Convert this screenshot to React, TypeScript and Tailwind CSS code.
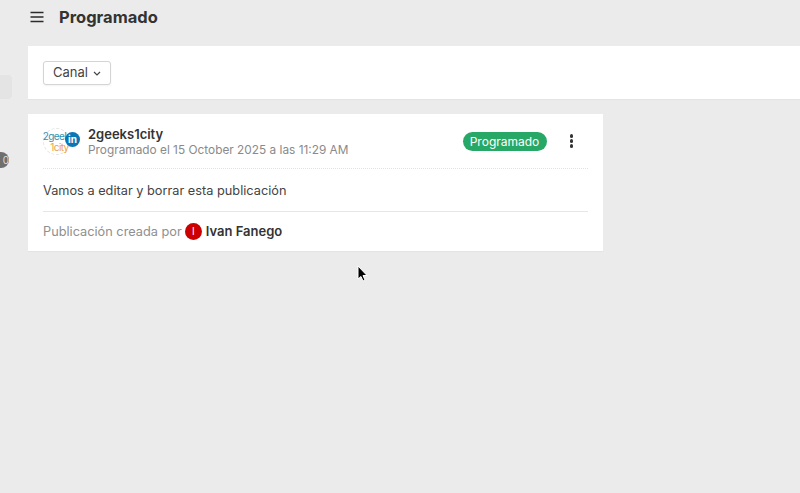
function Avatar() {
  return (
    <div className="relative w-[37px] h-[27px] shrink-0">
      <div className="w-[27px] h-[27px] rounded-full border border-dashed border-neutral-200 flex flex-col items-center justify-center text-[10px] leading-[10px] tracking-[-0.6px] whitespace-nowrap">
        <span className="text-[#2f93b5] -ml-[1px]">2geek</span>
        <span className="text-[#eba14a] ml-[6px] mt-[1px]">1city</span>
      </div>
      <div className="absolute left-[22px] top-[4px] w-[15px] h-[15px] rounded-full bg-[#0a77b5] text-white text-[10px] font-bold leading-[15px] text-center">
        in
      </div>
    </div>
  );
}

function Cursor() {
  return (
    <svg className="absolute left-[355px] top-[264px]" width="14" height="20" viewBox="0 0 14 20">
      <path d="M3 2 L3 15 L6 12.5 L8 17 L10 16 L8 11.5 L12 11.5 Z" fill="#000" stroke="#fff" strokeWidth="1" />
    </svg>
  );
}

function Hamburger() {
  return (
    <svg width="14" height="12" viewBox="0 0 14 12" className="shrink-0 ml-[2px]">
      <path d="M0.5 1.5 H13.5 M0.5 6 H13.5 M0.5 10.5 H13.5" stroke="#2b2b2b" strokeWidth="1.7" />
    </svg>
  );
}

export default function App() {
  return (
    <div className="relative w-[800px] h-[493px] overflow-hidden bg-[#ebebeb] flex font-['Inter',sans-serif]">
      {/* what is left of the sidebar */}
      <div className="w-[28px] shrink-0 flex flex-col">
        <div className="w-[12px] h-[24px] mt-[75px] bg-[#e4e4e4] rounded-r-sm" />
        <div className="w-[9px] h-[16px] mt-[53px] bg-[#6f6f6f] rounded-r-full text-[#ddd] text-[10px] leading-[16px] text-right overflow-hidden">
          0
        </div>
      </div>

      <div className="flex-1 min-w-0 flex flex-col">
        <header className="h-[46px] shrink-0 flex items-center pb-[12px]">
          <Hamburger />
          <h1 className="ml-[15px] text-[16.5px] font-bold leading-none text-[#333]">Programado</h1>
        </header>

        <div className="h-[54px] shrink-0 bg-white border-b border-[#e3e3e3] flex items-center pl-[15px]">
          <button className="h-[24px] w-[68px] pl-[9px] flex items-center gap-[5px] bg-white border border-[#d4d4d4] rounded-[3px] text-[13px] text-[#444] shadow-xs">
            Canal
            <svg width="8" height="5" viewBox="0 0 8 5" className="mt-[1px]">
              <path d="M1 1 L4 4 L7 1" fill="none" stroke="#444" strokeWidth="1.2" />
            </svg>
          </button>
        </div>

        <article className="mt-[14px] w-[575px] h-[138px] bg-white border-b border-[#e3e3e3] px-[15px]">
          <div className="h-[55px] flex items-center border-b border-dotted border-[#e2e2e2]">
            <Avatar />
            <div className="ml-[8px] flex-1 min-w-0 pt-[2px]">
              <div className="text-[13px] font-semibold leading-[16px] text-[#333]">2geeks1city</div>
              <div className="text-[11.85px] leading-[16px] text-[#8a8a8a]">
                Programado el 15 October 2025 a las 11:29 AM
              </div>
            </div>
            <span className="h-[19px] w-[84px] rounded-full bg-[#27a866] text-white text-[12px] leading-[19px] text-center whitespace-nowrap">
              Programado
            </span>
            <div className="ml-[23px] mr-[15px] flex flex-col gap-[1.5px]">
              <span className="w-[3.5px] h-[3.5px] rounded-full bg-[#333]" />
              <span className="w-[3.5px] h-[3.5px] rounded-full bg-[#333]" />
              <span className="w-[3.5px] h-[3.5px] rounded-full bg-[#333]" />
            </div>
          </div>

          <p className="h-[43px] pt-[2px] flex items-center border-b border-[#e6e6e6] text-[12.75px] text-[#444]">
            Vamos a editar y borrar esta publicación
          </p>

          <div className="h-[39px] flex items-center text-[12.75px]">
            <span className="text-[#8f8f8f]">Publicación creada por</span>
            <span className="ml-[3px] w-[17px] h-[17px] rounded-full bg-[#cc0000] text-white text-[10px] leading-[17px] text-center">
              I
            </span>
            <span className="ml-[4px] text-[13px] font-semibold text-[#333]">Ivan Fanego</span>
          </div>
        </article>
      </div>

      <Cursor />
    </div>
  );
}
